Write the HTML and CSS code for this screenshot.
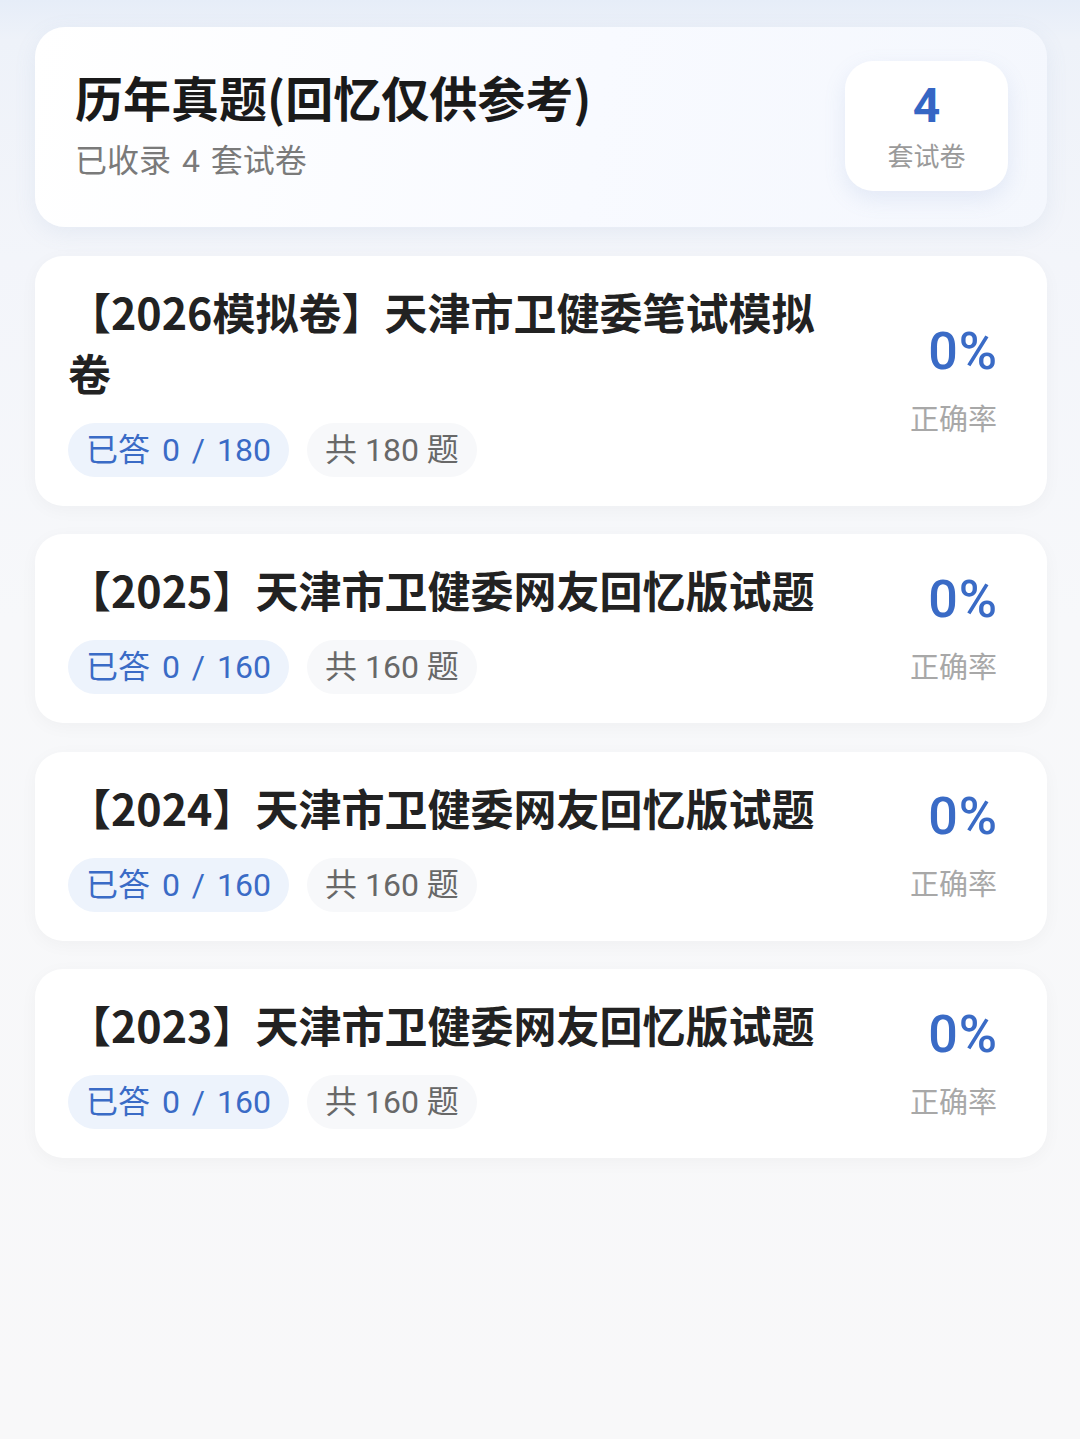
FILE: index.html
```html
<!DOCTYPE html>
<html lang="zh-CN">
<head>
<meta charset="utf-8">
<title>历年真题</title>
<link rel="stylesheet" href="styles.css">
</head>
<body>
<div class="page">
  <section class="header-card">
    <div class="header-text">
      <h1 class="header-title">历年真题(回忆仅供参考)</h1>
      <p class="header-sub">已收录 4 套试卷</p>
    </div>
    <div class="count-badge">
      <span class="count-num">4</span>
      <span class="count-label">套试卷</span>
    </div>
  </section>

  <section class="paper-card">
    <div class="paper-main">
      <h2 class="paper-title">【2026模拟卷】天津市卫健委笔试模拟卷</h2>
      <div class="pills">
        <span class="pill pill-blue">已答 0 / 180</span>
        <span class="pill pill-gray">共 180 题</span>
      </div>
    </div>
    <div class="paper-rate">
      <span class="rate-num">0%</span>
      <span class="rate-label">正确率</span>
    </div>
  </section>

  <section class="paper-card">
    <div class="paper-main">
      <h2 class="paper-title">【2025】天津市卫健委网友回忆版试题</h2>
      <div class="pills">
        <span class="pill pill-blue">已答 0 / 160</span>
        <span class="pill pill-gray">共 160 题</span>
      </div>
    </div>
    <div class="paper-rate">
      <span class="rate-num">0%</span>
      <span class="rate-label">正确率</span>
    </div>
  </section>

  <section class="paper-card">
    <div class="paper-main">
      <h2 class="paper-title">【2024】天津市卫健委网友回忆版试题</h2>
      <div class="pills">
        <span class="pill pill-blue">已答 0 / 160</span>
        <span class="pill pill-gray">共 160 题</span>
      </div>
    </div>
    <div class="paper-rate">
      <span class="rate-num">0%</span>
      <span class="rate-label">正确率</span>
    </div>
  </section>

  <section class="paper-card">
    <div class="paper-main">
      <h2 class="paper-title">【2023】天津市卫健委网友回忆版试题</h2>
      <div class="pills">
        <span class="pill pill-blue">已答 0 / 160</span>
        <span class="pill pill-gray">共 160 题</span>
      </div>
    </div>
    <div class="paper-rate">
      <span class="rate-num">0%</span>
      <span class="rate-label">正确率</span>
    </div>
  </section>
</div>
</body>
</html>
```

FILE: styles.css
```css
* { box-sizing: border-box; }

html, body {
  margin: 0;
  padding: 0;
}

body {
  width: 1080px;
  min-height: 1439px;
  font-family: "Noto Sans CJK SC", "Noto Sans", sans-serif;
  background: linear-gradient(180deg, #e6edf8 0px, #eef2f9 40px, #f3f5fa 260px, #f7f8fa 620px, #f8f8f9 100%);
  color: #222;
}

.page {
  padding: 27px 33px 60px 35px;
  display: flex;
  flex-direction: column;
  gap: 28.5px;
}

/* Header card */
.header-card {
  height: 200px;
  border-radius: 30px;
  background: linear-gradient(100deg, #ffffff 0%, #f8faff 55%, #f4f7fd 100%);
  box-shadow: 0 6px 22px rgba(120, 145, 190, 0.10);
  display: flex;
  align-items: center;
  justify-content: space-between;
  padding: 0 39px 0 40px;
}

.header-text {
  display: flex;
  flex-direction: column;
  margin-top: -6px;
}

.header-title {
  margin: 0;
  font-size: 48px;
  font-weight: 700;
  line-height: 62px;
  color: #1a1a1a;
}

.header-sub {
  margin: 12px 0 0;
  font-family: "Roboto", "Noto Sans CJK SC", sans-serif;
  font-size: 32px;
  line-height: 44px;
  word-spacing: 3px;
  color: #7a7a7a;
}

.count-badge {
  width: 163px;
  height: 130px;
  border-radius: 28px;
  background: #ffffff;
  box-shadow: 0 8px 22px rgba(110, 140, 200, 0.14);
  display: flex;
  flex-direction: column;
  align-items: center;
  justify-content: center;
  gap: 6px;
  margin-top: -2px;
}

.count-num {
  font-family: "Roboto", "Noto Sans CJK SC", sans-serif;
  font-size: 48px;
  font-weight: 700;
  line-height: 52px;
  color: #3566c4;
}

.count-label {
  font-size: 26px;
  line-height: 34px;
  color: #9a9a9a;
}

/* Paper cards */
.paper-card {
  background: #ffffff;
  border-radius: 28px;
  box-shadow: 0 4px 18px rgba(0, 0, 0, 0.035);
  display: flex;
  align-items: center;
  justify-content: space-between;
  padding: 25px 50px 29px 33px;
}

.paper-main {
  flex: 0 0 770px;
  display: flex;
  flex-direction: column;
  gap: 20px;
}

.paper-title {
  margin: 0;
  font-size: 43px;
  font-weight: 700;
  line-height: 61px;
  color: #222;
}

.pills {
  display: flex;
  gap: 18px;
}

.pill {
  height: 54px;
  line-height: 54px;
  padding: 0 18px;
  border-radius: 27px;
  font-family: "Roboto", "Noto Sans CJK SC", sans-serif;
  font-size: 32px;
  white-space: nowrap;
}

.pill-blue {
  background: #edf3fc;
  color: #3a6bc6;
  word-spacing: 4px;
}

.pill-gray {
  background: #f7f8fa;
  color: #686868;
  word-spacing: 0;
}

.paper-rate {
  display: flex;
  flex-direction: column;
  align-items: flex-end;
  gap: 14px;
}

.rate-num {
  font-family: "Roboto", "Noto Sans CJK SC", sans-serif;
  font-size: 52px;
  font-weight: 500;
  line-height: 62px;
  letter-spacing: 1px;
  margin-right: -1px;
  color: #3a6bc6;
}

.rate-label {
  font-size: 29px;
  line-height: 40px;
  color: #a8a8a8;
}
```
